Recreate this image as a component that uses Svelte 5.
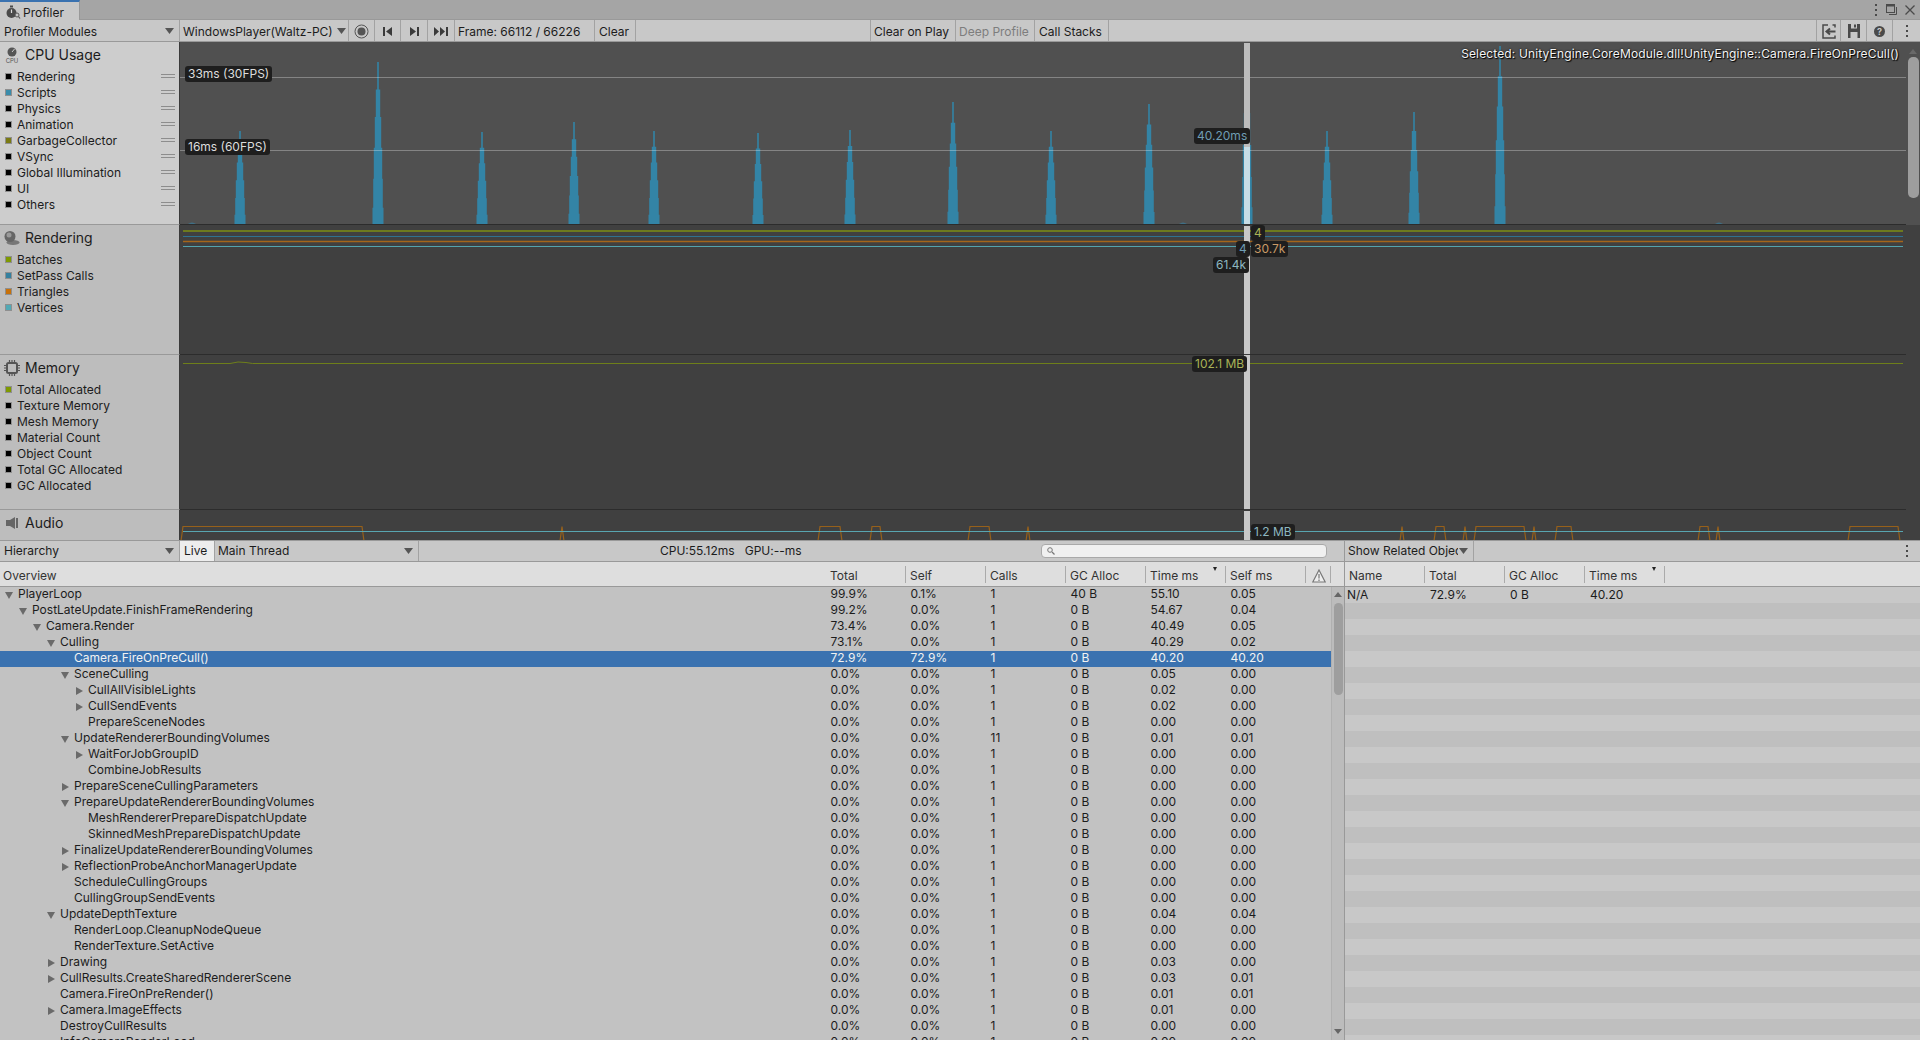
<script>
  const cpuLegend = [
    ["Rendering", "#000"],
    ["Scripts", "#3a8cab"],
    ["Physics", "#000"],
    ["Animation", "#000"],
    ["GarbageCollector", "#7a7a12"],
    ["VSync", "#000"],
    ["Global Illumination", "#000"],
    ["UI", "#000"],
    ["Others", "#000"],
  ];
  const renderLegend = [
    ["Batches", "#7f9a00"],
    ["SetPass Calls", "#34809f"],
    ["Triangles", "#c8710a"],
    ["Vertices", "#52a9b5"],
  ];
  const memoryLegend = [
    ["Total Allocated", "#7f9a00"],
    ["Texture Memory", "#000"],
    ["Mesh Memory", "#000"],
    ["Material Count", "#000"],
    ["Object Count", "#000"],
    ["Total GC Allocated", "#000"],
    ["GC Allocated", "#000"],
  ];

  // x centre and top of each spike, in page pixels
  const spikes = [
    [240, 131], [378, 62], [482, 132], [574, 122], [654, 131], [758, 133], [850, 130],
    [953, 102], [1051, 131], [1149, 104], [1247, 56], [1327, 131], [1414, 112], [1500, 46],
  ];
  const profile = [[0, 5.5], [0.1, 4.8], [0.28, 4.2], [0.47, 3.2], [0.66, 2.2], [0.83, 0.8]];

  function spikePath([cx, top]) {
    const x = cx - 180;
    const base = 182;
    const h = base - (top - 42);
    let left = "";
    let right = "";
    profile.forEach(([f, w], i) => {
      const y = base - h * f;
      const next = base - h * (profile[i + 1] ? profile[i + 1][0] : 1);
      left = `L${x - w} ${next}L${x - w} ${y}` + left;
      right += `L${x + w} ${y}L${x + w} ${next}`;
    });
    return `M${x - 5.5} ${base}${right}${left}Z`;
  }

  const stubs = [192, 1183, 1719];

  const audioBumps = [
    [183, 362], [562, 562], [820, 840], [872, 880], [970, 989], [1028, 1028], [1402, 1402], [1436, 1444], [1465, 1465],
    [1476, 1524], [1534, 1534], [1557, 1571], [1700, 1708], [1718, 1718], [1850, 1898],
  ];
  const audioPoints = audioBumps
    .map(([a, b]) => `M${a - 2 - 180} 31L${a - 180} 16.5L${b - 180} 16.5L${b + 2 - 180} 31`)
    .join("");

  const rows = [
    [0, "open", "PlayerLoop", "99.9%", "0.1%", "1", "40 B", "55.10", "0.05"],
    [1, "open", "PostLateUpdate.FinishFrameRendering", "99.2%", "0.0%", "1", "0 B", "54.67", "0.04"],
    [2, "open", "Camera.Render", "73.4%", "0.0%", "1", "0 B", "40.49", "0.05"],
    [3, "open", "Culling", "73.1%", "0.0%", "1", "0 B", "40.29", "0.02"],
    [4, "", "Camera.FireOnPreCull()", "72.9%", "72.9%", "1", "0 B", "40.20", "40.20"],
    [4, "open", "SceneCulling", "0.0%", "0.0%", "1", "0 B", "0.05", "0.00"],
    [5, "closed", "CullAllVisibleLights", "0.0%", "0.0%", "1", "0 B", "0.02", "0.00"],
    [5, "closed", "CullSendEvents", "0.0%", "0.0%", "1", "0 B", "0.02", "0.00"],
    [5, "", "PrepareSceneNodes", "0.0%", "0.0%", "1", "0 B", "0.00", "0.00"],
    [4, "open", "UpdateRendererBoundingVolumes", "0.0%", "0.0%", "11", "0 B", "0.01", "0.01"],
    [5, "closed", "WaitForJobGroupID", "0.0%", "0.0%", "1", "0 B", "0.00", "0.00"],
    [5, "", "CombineJobResults", "0.0%", "0.0%", "1", "0 B", "0.00", "0.00"],
    [4, "closed", "PrepareSceneCullingParameters", "0.0%", "0.0%", "1", "0 B", "0.00", "0.00"],
    [4, "open", "PrepareUpdateRendererBoundingVolumes", "0.0%", "0.0%", "1", "0 B", "0.00", "0.00"],
    [5, "", "MeshRendererPrepareDispatchUpdate", "0.0%", "0.0%", "1", "0 B", "0.00", "0.00"],
    [5, "", "SkinnedMeshPrepareDispatchUpdate", "0.0%", "0.0%", "1", "0 B", "0.00", "0.00"],
    [4, "closed", "FinalizeUpdateRendererBoundingVolumes", "0.0%", "0.0%", "1", "0 B", "0.00", "0.00"],
    [4, "closed", "ReflectionProbeAnchorManagerUpdate", "0.0%", "0.0%", "1", "0 B", "0.00", "0.00"],
    [4, "", "ScheduleCullingGroups", "0.0%", "0.0%", "1", "0 B", "0.00", "0.00"],
    [4, "", "CullingGroupSendEvents", "0.0%", "0.0%", "1", "0 B", "0.00", "0.00"],
    [3, "open", "UpdateDepthTexture", "0.0%", "0.0%", "1", "0 B", "0.04", "0.04"],
    [4, "", "RenderLoop.CleanupNodeQueue", "0.0%", "0.0%", "1", "0 B", "0.00", "0.00"],
    [4, "", "RenderTexture.SetActive", "0.0%", "0.0%", "1", "0 B", "0.00", "0.00"],
    [3, "closed", "Drawing", "0.0%", "0.0%", "1", "0 B", "0.03", "0.00"],
    [3, "closed", "CullResults.CreateSharedRendererScene", "0.0%", "0.0%", "1", "0 B", "0.03", "0.01"],
    [3, "", "Camera.FireOnPreRender()", "0.0%", "0.0%", "1", "0 B", "0.01", "0.01"],
    [3, "closed", "Camera.ImageEffects", "0.0%", "0.0%", "1", "0 B", "0.01", "0.00"],
    [3, "", "DestroyCullResults", "0.0%", "0.0%", "1", "0 B", "0.00", "0.00"],
    [3, "", "InfoCameraRenderLoad", "0.0%", "0.0%", "1", "0 B", "0.00", "0.00"],
  ];
  const selectedRow = 4;
  const stripes = Array.from({ length: 28 }, (_, i) => i);
</script>

{#snippet legend(items, handles)}
  <ul class="legend">
    {#each items as [name, color]}
      <li>
        <i class="swatch" style="background: {color}"></i>
        <span>{name}</span>
        {#if handles}<b class="handle"></b>{/if}
      </li>
    {/each}
  </ul>
{/snippet}

{#snippet arrow()}
  <svg class="caret" width="9" height="6" viewBox="0 0 9 6"><path d="M0 0H9L4.5 6Z" /></svg>
{/snippet}

<div class="profiler">
  <div class="tabs">
    <div class="tab">
      <svg width="15" height="14" viewBox="0 0 15 14">
        <circle cx="5.5" cy="8" r="5" fill="#4a4a4a" />
        <rect x="4" y="0.5" width="3" height="2" fill="#4a4a4a" />
        <path d="M5.5 8V4.5" stroke="#ddd" stroke-width="1.2" />
        <circle cx="11" cy="10" r="2" fill="#c8c8c8" stroke="#555" />
        <path d="M12.5 11.5L14 13.5" stroke="#555" stroke-width="1.2" />
      </svg>
      Profiler
    </div>
    <div class="window-actions">
      <svg width="4" height="12" viewBox="0 0 4 12"><g fill="#4b4b4b"><rect x="1" y="0" width="2" height="2" /><rect x="1" y="5" width="2" height="2" /><rect x="1" y="10" width="2" height="2" /></g></svg>
      <svg width="11" height="11" viewBox="0 0 11 11" fill="none" stroke="#4b4b4b"><rect x="0.5" y="0.5" width="8" height="8" /><path d="M0 1.5H9" stroke-width="2" /><path d="M10.5 3V10.5H3" /></svg>
      <svg width="10" height="10" viewBox="0 0 10 10" stroke="#4b4b4b" stroke-width="1.3"><path d="M0.5 0.5L9.5 9.5M9.5 0.5L0.5 9.5" /></svg>
    </div>
  </div>

  <div class="toolbar">
    <div class="tb modules">Profiler Modules {@render arrow()}</div>
    <div class="tb player">WindowsPlayer(Waltz-PC) {@render arrow()}</div>
    <div class="tb icon w26">
      <svg width="15" height="15" viewBox="0 0 15 15"><circle cx="7.5" cy="7.5" r="6.5" fill="none" stroke="#555" /><circle cx="7.5" cy="7.5" r="4" fill="#555" /></svg>
    </div>
    <div class="tb icon w26"><svg width="10" height="9" viewBox="0 0 10 9" fill="#3a3a3a"><rect width="2" height="9" /><path d="M9 0V9L3 4.5Z" /></svg></div>
    <div class="tb icon w27"><svg width="10" height="9" viewBox="0 0 10 9" fill="#3a3a3a"><rect x="8" width="2" height="9" /><path d="M1 0V9L7 4.5Z" /></svg></div>
    <div class="tb icon w27"><svg width="14" height="9" viewBox="0 0 14 9" fill="#3a3a3a"><path d="M0 0V9L5 4.5ZM6 0V9L11 4.5Z" /><rect x="12" width="2" height="9" /></svg></div>
    <div class="tb frame">Frame: 66112 / 66226</div>
    <div class="tb clear">Clear</div>
    <div class="tb gap1"></div>
    <div class="tb play">Clear on Play</div>
    <div class="tb deep">Deep Profile</div>
    <div class="tb stacks">Call Stacks</div>
    <div class="spacer"></div>
    <div class="tb icon left w25">
      <svg width="14" height="15" viewBox="0 0 14 15" fill="none" stroke="#4a4a4a" stroke-width="1.5"><path d="M6 1H1V14H13V11.5M13 3.5V1H10.5" /><path d="M13.5 7.5H5M8 4.5L4.5 7.5L8 10.5" stroke-width="2" /></svg>
    </div>
    <div class="tb icon w26">
      <svg width="12" height="14" viewBox="0 0 12 14"><path d="M0 0H12V14H0Z" fill="#4a4a4a" /><rect x="3" y="0" width="6" height="4.5" fill="#c8c8c8" /><rect x="6" y="0.5" width="2" height="3" fill="#4a4a4a" /><rect x="2.5" y="8" width="7" height="6" fill="#c8c8c8" /></svg>
    </div>
    <div class="tb icon w26">
      <svg width="11" height="11" viewBox="0 0 11 11"><circle cx="5.5" cy="5.5" r="5.5" fill="#4a4a4a" /><text x="5.5" y="9" font-size="9" font-weight="700" text-anchor="middle" fill="#c8c8c8" font-family="Inter, sans-serif">?</text></svg>
    </div>
    <div class="icon kebab">
      <svg width="4" height="12" viewBox="0 0 4 12"><g fill="#4a4a4a"><rect x="1" y="0" width="2" height="2" /><rect x="1" y="5" width="2" height="2" /><rect x="1" y="10" width="2" height="2" /></g></svg>
    </div>
  </div>

  <div class="charts">
    <section class="module cpu">
      <div class="side">
        <h3>
          <svg width="16" height="16" viewBox="0 0 16 16">
            <circle cx="8" cy="5" r="4.5" fill="#555" />
            <path d="M8 5L10.5 2" stroke="#ccc" />
            <text x="8" y="15.5" font-size="6" text-anchor="middle" fill="#555" font-family="Inter, sans-serif">CPU</text>
          </svg>
          CPU Usage
        </h3>
        {@render legend(cpuLegend, true)}
      </div>
      <div class="chart">
        <svg class="plot" width="1726" height="182">
          {#each spikes as spike}
            <path d={spikePath(spike)} fill="#3384a6" />
          {/each}
          {#each stubs as x}
            <path d="M{x - 180 - 4} 182Q{x - 180} 179 {x - 180 + 4} 182Z" fill="#3f6f85" />
          {/each}
          <path d="M0 35.5H1726M0 108.5H1726" stroke="#ffffff" stroke-opacity="0.3" />
        </svg>
        <span class="tag" style="left: 5px; top: 24px; color: #ddd">33ms (30FPS)</span>
        <span class="tag" style="left: 5px; top: 97px; color: #ddd">16ms (60FPS)</span>
        <span class="selected-name">Selected: UnityEngine.CoreModule.dll!UnityEngine::Camera.FireOnPreCull()</span>
      </div>
      <div class="scrollbar"><i class="up"></i><i class="thumb"></i></div>
    </section>

    <section class="module rendering">
      <div class="side">
        <h3>
          <svg width="16" height="16" viewBox="0 0 16 16">
            <ellipse cx="9" cy="12.5" rx="6.5" ry="2.5" fill="#777" />
            <circle cx="6" cy="6.5" r="5.5" fill="#666" />
            <circle cx="5" cy="5" r="2.5" fill="#9a9a9a" />
          </svg>
          Rendering
        </h3>
        {@render legend(renderLegend, false)}
      </div>
      <div class="chart">
        <svg class="plot" width="1726" height="130" fill="none">
          <path d="M3 6H1723" stroke="#6d7a1e" stroke-width="2" />
          <path d="M3 11.5H1723" stroke="#2e7290" />
          <path d="M3 16.5H1723" stroke="#a5651a" stroke-width="1.5" />
          <path d="M3 21.5H1723" stroke="#52a3ae" />
        </svg>
      </div>
      <div class="scrollbar"></div>
    </section>

    <section class="module memory">
      <div class="side">
        <h3>
          <svg width="16" height="16" viewBox="0 0 16 16" fill="none" stroke="#555">
            <rect x="3" y="3" width="10" height="10" rx="1.5" stroke-width="2" />
            <path d="M5.5 0V2M8 0V2M10.5 0V2M5.5 14V16M8 14V16M10.5 14V16M0 5.5H2M0 8H2M0 10.5H2M14 5.5H16M14 8H16M14 10.5H16" stroke-width="1.2" />
          </svg>
          Memory
        </h3>
        {@render legend(memoryLegend, false)}
      </div>
      <div class="chart">
        <svg class="plot" width="1726" height="155" fill="none">
          <path d="M3 8.5H50Q58 6 66 7.5T76 8.5H1723" stroke="#6e7f1a" />
        </svg>
      </div>
      <div class="scrollbar"></div>
    </section>

    <section class="module audio">
      <div class="side">
        <h3>
          <svg width="16" height="16" viewBox="0 0 16 16" fill="#666"><path d="M2 5H6L11 2V14L6 11H2Z" /><rect x="12" y="3" width="2" height="10" /></svg>
          Audio
        </h3>
      </div>
      <div class="chart">
        <svg class="plot" width="1726" height="31" fill="none">
          <path d={audioPoints} stroke="#96601a" stroke-width="1.2" />
          <path d="M3 21.5H1723" stroke="#58a5b0" />
        </svg>
      </div>
      <div class="scrollbar"></div>
    </section>

    <!-- selected frame marker and value tags run over all the charts -->
    <div class="frame-bar"></div>
    <span class="tag" style="left: 1194px; top: 86px; color: #6f9db3">40.20ms</span>
    <span class="tag" style="left: 1251px; top: 183px; color: #a9b357">4</span>
    <span class="tag" style="left: 1236px; top: 199px; color: #6f9db3">4</span>
    <span class="tag" style="left: 1251px; top: 199px; color: #c99a66">30.7k</span>
    <span class="tag" style="left: 1213px; top: 215px; color: #8db7c0">61.4k</span>
    <span class="tag" style="left: 1192px; top: 314px; color: #a9b357">102.1 MB</span>
    <span class="tag" style="left: 1251px; top: 482px; color: #8db7c0">1.2 MB</span>
  </div>

  <div class="lower">
    <div class="lower-main">
      <div class="subbar">
        <div class="tb hierarchy">Hierarchy {@render arrow()}</div>
        <div class="tb live">Live</div>
        <div class="tb thread">Main Thread {@render arrow()}</div>
        <div class="timing">CPU:55.12ms&nbsp;&nbsp;&nbsp;GPU:--ms</div>
        <div class="search">
          <svg width="8" height="8" viewBox="0 0 8 8" fill="none" stroke="#777"><circle cx="3" cy="3" r="2.3" /><path d="M5 5L7.5 7.5" stroke-width="1.3" /></svg>
        </div>
      </div>
      <div class="thead grid">
        <span class="first">Overview</span>
        <span>Total</span>
        <span>Self</span>
        <span>Calls</span>
        <span>GC Alloc</span>
        <span class="sorted">Time ms</span>
        <span>Self ms</span>
        <span class="warn">
          <svg width="14" height="14" viewBox="0 0 14 14" fill="none" stroke="#777" stroke-width="1.2"><path d="M7 1L13.2 13H0.8Z" fill="#eee" /><path d="M7 5V9.5M7 10.5V12" /></svg>
        </span>
      </div>
      <div class="tbody">
        <div class="rows">
          {#each rows as [depth, state, name, ...cells], i}
            <div class="row grid" class:selected={i === selectedRow}>
              <span class="name" style="padding-left: {18 + depth * 14}px">
                {#if state}
                  <i class={["twisty", state]} style="left: {depth * 14 + 5}px"></i>
                {/if}
                {name}
              </span>
              {#each cells as cell}<span>{cell}</span>{/each}
            </div>
          {/each}
        </div>
        <div class="vscroll"><i class="up"></i><i class="thumb"></i><i class="down"></i></div>
      </div>
    </div>

    <div class="lower-side">
      <div class="subbar">
        <div class="tb related"><span>Show Related Objects</span> {@render arrow()}</div>
        <div class="spacer"></div>
        <div class="icon kebab left">
          <svg width="4" height="12" viewBox="0 0 4 12"><g fill="#4a4a4a"><rect x="1" y="0" width="2" height="2" /><rect x="1" y="5" width="2" height="2" /><rect x="1" y="10" width="2" height="2" /></g></svg>
        </div>
      </div>
      <div class="thead side-grid">
        <span>Name</span>
        <span>Total</span>
        <span>GC Alloc</span>
        <span class="sorted">Time ms</span>
        <span class="rest"></span>
      </div>
      <div class="side-body">
        <div class="row side-grid">
          <span class="na">N/A</span><span>72.9%</span><span>0 B</span><span>40.20</span>
        </div>
        {#each stripes as i}
          <div class="stripe" class:dark={i % 2 === 0}></div>
        {/each}
      </div>
    </div>
  </div>
</div>

<style>
  :global(body) {
    margin: 0;
    background: #c2c2c2;
  }
  .profiler {
    width: 1920px;
    height: 1040px;
    overflow: hidden;
    display: flex;
    flex-direction: column;
    font-family: Inter, "Liberation Sans", sans-serif;
    font-size: 12px;
    color: #1c1c1c;
  }
  .tabs {
    height: 20px;
    flex: none;
    display: flex;
    justify-content: space-between;
    background: #a5a5a5;
    border-bottom: 1px solid #999;
    box-sizing: border-box;
  }
  .tab {
    width: 80px;
    height: 20px;
    box-sizing: border-box;
    background: #c8c8c8;
    border-top: 2px solid #3a72b0;
    border-right: 1px solid #999;
    display: flex;
    align-items: center;
    gap: 2px;
    padding: 2px 0 0 6px;
  }
  .window-actions {
    display: flex;
    align-items: center;
    gap: 8px;
    padding-right: 5px;
  }
  .toolbar {
    height: 22px;
    flex: none;
    display: flex;
    box-sizing: border-box;
    background: #c8c8c8;
    border-bottom: 1px solid #999;
  }
  .tb {
    display: flex;
    align-items: center;
    box-sizing: border-box;
    border-right: 1px solid #a2a2a2;
    white-space: nowrap;
    padding-top: 1px;
  }
  .tb.left {
    border-left: 1px solid #a2a2a2;
  }
  .icon {
    justify-content: center;
    display: flex;
    align-items: center;
  }
  .w25 { width: 25px; }
  .w26 { width: 26px; }
  .w27 { width: 27px; }
  .kebab { width: 27px; }
  .modules {
    width: 180px;
    padding-left: 4px;
    padding-right: 5px;
    justify-content: space-between;
  }
  .player {
    width: 169px;
    padding-left: 3px;
    gap: 4px;
  }
  .frame {
    width: 140px;
    padding-left: 3px;
  }
  .clear {
    width: 41px;
    padding-left: 4px;
  }
  .gap1 {
    width: 235px;
    border-right: 1px solid #a2a2a2;
  }
  .play {
    width: 85px;
    padding-left: 3px;
  }
  .deep {
    width: 79px;
    padding-left: 3px;
    color: #7d7d7d;
  }
  .stacks {
    width: 74px;
    padding-left: 4px;
  }
  .spacer {
    flex: 1;
  }
  .caret path {
    fill: #555;
  }
  .charts {
    height: 498px;
    flex: none;
    position: relative;
    display: flex;
    flex-direction: column;
  }
  .module {
    display: flex;
    box-sizing: border-box;
  }
  .cpu { height: 183px; }
  .rendering { height: 130px; }
  .memory { height: 155px; }
  .audio { height: 30px; }
  .side {
    width: 180px;
    flex: none;
    box-sizing: border-box;
    background: #bdbdbd;
    border-right: 1px solid #3a3a3a;
    border-bottom: 1px solid #999;
  }
  .cpu .side {
    background: #cdcdcd;
  }
  .audio .side {
    border-bottom: none;
  }
  .side h3 {
    margin: 0;
    height: 25px;
    display: flex;
    align-items: center;
    gap: 5px;
    padding: 0 0 0 4px;
    box-sizing: border-box;
    font-size: 14px;
    font-weight: 400;
  }
  .legend {
    list-style: none;
    margin: 1px 0 0;
    padding: 0;
  }
  .legend li {
    height: 16px;
    display: flex;
    align-items: center;
    padding-left: 5px;
    gap: 5px;
  }
  .swatch {
    width: 7px;
    height: 7px;
    border: 1px solid #8f8f8f;
    box-sizing: border-box;
    flex: none;
  }
  .handle {
    margin-left: auto;
    margin-right: 4px;
    width: 14px;
    height: 2px;
    border-top: 1px solid #8d8d8d;
    border-bottom: 1px solid #8d8d8d;
  }
  .chart {
    flex: 1;
    position: relative;
    background: #404040;
    overflow: hidden;
    border-bottom: 1px solid #2c2c2c;
  }
  .audio .chart {
    border-bottom: none;
  }
  .cpu .chart {
    background: #505050;
  }
  .plot {
    position: absolute;
    left: 0;
    top: 0;
    display: block;
  }
  .scrollbar {
    width: 14px;
    flex: none;
    position: relative;
    background: #404040;
  }
  .cpu .scrollbar {
    background: #505050;
  }
  .scrollbar .thumb {
    position: absolute;
    left: 2px;
    right: 1px;
    top: 15px;
    height: 141px;
    border-radius: 5px;
    background: #9e9e9e;
  }
  .scrollbar .up {
    position: absolute;
    left: 3px;
    top: 7px;
    border: 4px solid transparent;
    border-top: 0;
    border-bottom: 5px solid #696969;
  }
  .selected-name {
    position: absolute;
    right: 7px;
    top: 4px;
    color: #f4f4f4;
    letter-spacing: 0.14px;
    text-shadow: 1px 1px 1px #000, 0 0 2px #000;
    white-space: nowrap;
  }
  .tag {
    position: absolute;
    height: 16px;
    line-height: 16px;
    padding: 0 3px;
    border-radius: 3px;
    background: #1e1e1e;
    white-space: nowrap;
    z-index: 2;
  }
  .frame-bar {
    position: absolute;
    left: 1244px;
    top: 1px;
    width: 6px;
    height: 497px;
    background: linear-gradient(
      #bdbdbd 0 104px,
      #c7dde6 104px 181px,
      #3a3a3a 181px 183px,
      #c8c8c8 183px 311px,
      #3a3a3a 311px 312px,
      #c8c8c8 312px 466px,
      #3a3a3a 466px 468px,
      #c8c8c8 468px
    );
  }
  .lower {
    flex: 1;
    display: flex;
    min-height: 0;
    border-top: 1px solid #999;
  }
  .lower-main {
    width: 1344px;
    flex: none;
    display: flex;
    flex-direction: column;
    min-width: 0;
  }
  .lower-side {
    flex: 1;
    display: flex;
    flex-direction: column;
    min-width: 0;
    border-left: 1px solid #999;
  }
  .subbar {
    height: 21px;
    flex: none;
    box-sizing: border-box;
    display: flex;
    background: #c8c8c8;
    border-bottom: 1px solid #999;
    position: relative;
  }
  .subbar .tb {
    padding-top: 0;
    padding-bottom: 1px;
  }
  .hierarchy {
    width: 180px;
    padding-left: 4px;
    padding-right: 5px;
    justify-content: space-between;
  }
  .live {
    width: 35px;
    padding-left: 4px;
    background: #ededed;
  }
  .thread {
    width: 204px;
    padding-left: 3px;
    padding-right: 5px;
    justify-content: space-between;
  }
  .timing {
    position: absolute;
    left: 660px;
    top: 0;
    line-height: 20px;
  }
  .search {
    position: absolute;
    left: 1041px;
    top: 3px;
    width: 286px;
    height: 14px;
    box-sizing: border-box;
    background: #f0f0f0;
    border: 1px solid #a9a9a9;
    border-radius: 4px;
    padding-left: 5px;
    display: flex;
    align-items: center;
  }
  .related {
    width: 129px;
    padding-left: 3px;
    padding-right: 3px;
    gap: 1px;
  }
  .related span {
    width: 110px;
    overflow: hidden;
  }
  .thead {
    height: 25px;
    flex: none;
    box-sizing: border-box;
    background: #dedede;
    border-bottom: 1px solid #999;
    color: #333;
  }
  .grid {
    display: grid;
    grid-template-columns: 826px 80px 80px 80px 80px 80px 80px 25px;
  }
  .side-grid {
    display: grid;
    grid-template-columns: 80px 80px 80px 80px 1fr;
  }
  .thead span {
    position: relative;
    display: flex;
    align-items: center;
    padding: 3px 0 0 4px;
  }
  .thead span:not(.first):not(.rest)::after {
    content: "";
    position: absolute;
    right: 0;
    top: 4px;
    height: 17px;
    border-right: 1px solid #aaa;
  }
  .thead .first {
    padding-left: 3px;
  }
  .thead .warn {
    padding: 3px 0 0 6px;
  }
  .thead .sorted::before {
    content: "";
    position: absolute;
    right: 9px;
    top: 5px;
    border: 2.5px solid transparent;
    border-top: 4px solid #222;
    border-bottom: 0;
  }
  .tbody {
    flex: 1;
    min-height: 0;
    display: flex;
    background: #c2c2c2;
  }
  .rows {
    width: 1331px;
    flex: none;
    overflow: hidden;
  }
  .row {
    height: 16px;
    line-height: 14px;
    white-space: nowrap;
  }
  .row span {
    padding-left: 4.5px;
  }
  .row .name {
    position: relative;
  }
  .row.selected {
    background: #3a72b0;
    color: #f2f2f2;
  }
  .twisty {
    position: absolute;
    top: 5px;
    width: 0;
    height: 0;
  }
  .twisty.open {
    border-left: 4px solid transparent;
    border-right: 4px solid transparent;
    border-top: 7px solid #6a6a6a;
  }
  .twisty.closed {
    margin-left: 1px;
    top: 4px;
    border-top: 4px solid transparent;
    border-bottom: 4px solid transparent;
    border-left: 7px solid #6a6a6a;
  }
  .vscroll {
    flex: 1;
    position: relative;
    background: #bcbcbc;
    border-left: 1px solid #b0b0b0;
  }
  .vscroll .thumb {
    position: absolute;
    left: 2px;
    width: 9px;
    top: 16px;
    height: 92px;
    border-radius: 5px;
    background: #9e9e9e;
  }
  .vscroll .up,
  .vscroll .down {
    position: absolute;
    left: 2px;
    border: 4px solid transparent;
  }
  .vscroll .up {
    top: 5px;
    border-top: 0;
    border-bottom: 5px solid #666;
  }
  .vscroll .down {
    bottom: 6px;
    border-bottom: 0;
    border-top: 5px solid #666;
  }
  .side-body {
    flex: 1;
    min-height: 0;
    overflow: hidden;
    background: #c8c8c8;
  }
  .side-body .row {
    line-height: 16px;
  }
  .side-body .na {
    padding-left: 2px;
  }
  .side-body .row span:nth-child(n + 2) {
    padding-left: 5px;
  }
  .stripe {
    height: 16px;
  }
  .stripe.dark {
    background: #bfbfbf;
  }
</style>
